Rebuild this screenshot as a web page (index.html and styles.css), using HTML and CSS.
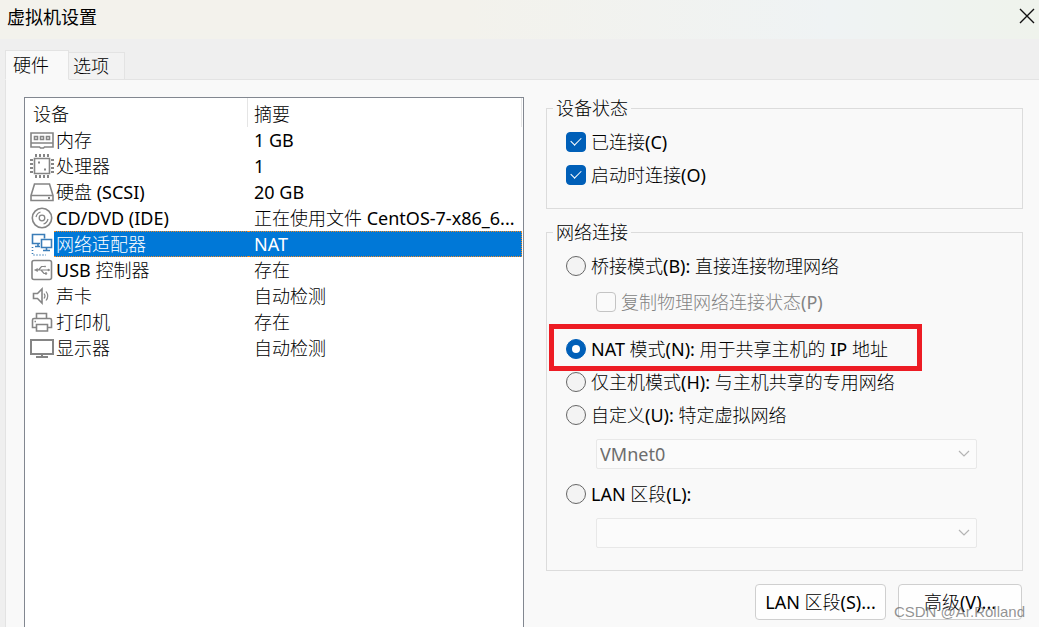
FILE: index.html
```html
<!DOCTYPE html>
<html lang="zh-CN">
<head>
  <meta charset="UTF-8">
  <meta name="viewport" content="width=device-width, initial-scale=1.0">
  <title>虚拟机设置</title>
  <link rel="stylesheet" href="styles.css">
</head>
<body>

  <header class="titlebar">
    <h1>虚拟机设置</h1>
    <button class="close" type="button" aria-label="关闭">
      <svg width="16" height="16" viewBox="0 0 16 16"><path d="M1 1l14 14M15 1L1 15" stroke="#111" stroke-width="1.4" fill="none"/></svg>
    </button>
  </header>

  <nav class="tabs">
    <button class="tab active" type="button">硬件</button>
    <button class="tab" type="button">选项</button>
  </nav>

  <main class="panel">

    <!-- Device list -->
    <div class="device-list">
      <table>
        <colgroup>
          <col class="col-icon">
          <col class="col-name">
          <col>
        </colgroup>
        <thead>
          <tr><th colspan="2">设备</th><th>摘要</th></tr>
        </thead>
        <tbody>
          <tr>
            <td class="icon"><svg viewBox="0 0 24 24"><path d="M1 5h22v10H1zM1 15v4h8.500l1 1h3l1-1H23v-4"/><path d="M4.500 8.500h3v3h-3zM10.500 8.500h3v3h-3zM16.500 8.500h3v3h-3z"/></svg></td>
            <td>内存</td><td>1 GB</td>
          </tr>
          <tr>
            <td class="icon"><svg viewBox="0 0 24 24"><path d="M4.500 4.500h15v15h-15z"/><path stroke-width="3" stroke-dasharray="2 2" d="M5 1.500h14M5 22.500h14M1.500 5v14M22.500 5v14"/><path stroke-width="2" d="M8 8.500h2M14 15.500h2"/></svg></td>
            <td>处理器</td><td>1</td>
          </tr>
          <tr>
            <td class="icon"><svg viewBox="0 0 24 24"><path d="M4.500 4h15L23 15.500v5H1v-5zM1 15.500h22"/><path stroke-width="2" d="M18 18h2"/></svg></td>
            <td>硬盘 (SCSI)</td><td>20 GB</td>
          </tr>
          <tr>
            <td class="icon"><svg viewBox="0 0 24 24"><circle cx="12" cy="12" r="9.700"/><circle cx="12" cy="12" r="2.800" stroke-width="1.300"/><path stroke-width="1.200" d="M6 11q1-4 4.500-5M18 13q-1 4-4.500 5"/></svg></td>
            <td>CD/DVD (IDE)</td><td>正在使用文件 CentOS-7-x86_6...</td>
          </tr>
          <tr class="selected">
            <td class="icon"><svg viewBox="0 0 24 24"><path stroke="#3b7db8" d="M10 11.500H2.500v-9h12v4M8 11.500v3M5 14.500h5"/><path stroke="#3b7db8" d="M11.500 7.500h10v8h-10zM16.500 15.500v3M13 18.500h7"/><path stroke="#3b7db8" stroke-dasharray="1 2" d="M2.500 15v8H16"/></svg></td>
            <td>网络适配器</td><td>NAT</td>
          </tr>
          <tr>
            <td class="icon"><svg viewBox="0 0 24 24"><rect x="2" y="2.500" width="19.500" height="19" rx="2"/><path stroke-width="1.200" d="M6 12h13M8.500 12l3-3.500h3M11 12l3 3.500h2"/><path d="M4.500 12L7.500 10.500v3zM18 11l2 1-2 1zM14.500 8h1v1h-1z" fill="#858585" stroke-width=".6"/><circle cx="16" cy="15.500" r=".5"/></svg></td>
            <td>USB 控制器</td><td>存在</td>
          </tr>
          <tr>
            <td class="icon"><svg viewBox="0 0 24 24"><path d="M3.500 9.500h4l4.500-4.500v14l-4.500-4.500h-4z"/><path stroke-width="1.200" d="M14 9.500q2 2.500 0 5M16 7.500q3.500 4.500 0 9"/></svg></td>
            <td>声卡</td><td>自动检测</td>
          </tr>
          <tr>
            <td class="icon"><svg viewBox="0 0 24 24"><path d="M6.500 8.500V3.500h10v5M6.500 17.500H2.500V10q0-1.500 1.500-1.500h16q1.500 0 1.500 1.500v7.500h-4"/><path d="M6.500 14.500h11v6.500h-11zM4.500 11.500h1.500"/></svg></td>
            <td>打印机</td><td>存在</td>
          </tr>
          <tr>
            <td class="icon"><svg viewBox="0 0 24 24"><path stroke-width="2" d="M1 4h22v14H1zM6 21h12M12 18v3"/></svg></td>
            <td>显示器</td><td>自动检测</td>
          </tr>
        </tbody>
      </table>
    </div>

    <!-- Settings of the selected device -->
    <form class="settings">
      <fieldset>
        <legend>设备状态</legend>
        <div class="group status">
          <label class="option"><input type="checkbox" checked>已连接(C)</label>
          <label class="option"><input type="checkbox" checked>启动时连接(O)</label>
        </div>
      </fieldset>

      <fieldset>
        <legend>网络连接</legend>
        <div class="group network">
          <label class="option"><input type="radio" name="net">桥接模式(B): 直接连接物理网络</label>
          <label class="option nested"><input type="checkbox" disabled>复制物理网络连接状态(P)</label>
          <label class="option marked"><input type="radio" name="net" checked>NAT 模式(N): 用于共享主机的 IP 地址</label>
          <label class="option"><input type="radio" name="net">仅主机模式(H): 与主机共享的专用网络</label>
          <label class="option"><input type="radio" name="net">自定义(U): 特定虚拟网络</label>
          <div class="dropdown">
            <select aria-label="特定虚拟网络" disabled><option>VMnet0</option></select>
            <svg width="12" height="8" viewBox="0 0 12 8"><path d="M1 1l5 5 5-5" stroke="#b4b4b4" stroke-width="1.200" fill="none"/></svg>
          </div>
          <label class="option"><input type="radio" name="net">LAN 区段(L):</label>
          <div class="dropdown">
            <select aria-label="LAN 区段" disabled><option></option></select>
            <svg width="12" height="8" viewBox="0 0 12 8"><path d="M1 1l5 5 5-5" stroke="#b4b4b4" stroke-width="1.200" fill="none"/></svg>
          </div>
        </div>
      </fieldset>

      <div class="actions">
        <button class="btn" type="button">LAN 区段(S)...</button>
        <button class="btn" type="button">高级(V)...</button>
      </div>
    </form>

  </main>

  <div class="watermark">CSDN @Ar.Rolland</div>

</body>
</html>
```
FILE: styles.css
```css
* {
  box-sizing: border-box;
}

body {
  margin: 0;
  min-height: 100vh;
  display: flex;
  flex-direction: column;
  position: relative;
  background-color: #efefef;
  color: #000;
  font-family: "Noto Sans", "Noto Sans CJK SC Light", "Noto Sans CJK SC", sans-serif;
  font-size: 18px;
  line-height: 22px;
}

button,
select {
  font: inherit;
  color: inherit;
}

/* Title bar */
.titlebar {
  height: 39px;
  padding: 0 4px 8px 7px;
  display: flex;
  align-items: center;
  justify-content: space-between;
  background: linear-gradient(90deg, #f3f2ec 0%, #f3f2ec 45%, #eff3f4 80%, #eff3ec 100%);
}

.titlebar h1 {
  margin: 0;
  font-family: "Noto Sans CJK SC", sans-serif;
  font-size: 18px;
  font-weight: normal;
}

.close {
  display: flex;
  padding: 0;
  border: none;
  background: none;
}

/* Tabs */
.tabs {
  display: flex;
  align-items: flex-end;
  height: 41px;
  padding-left: 5px;
}

.tab {
  height: 28px;
  padding: 0 15px 0 4px;
  border: 1px solid #e3e3e3;
  border-left: none;
  background-color: #f2f2f2;
}

.tab.active {
  position: relative;
  height: 30px;
  padding: 0 19px 0 7px;
  border-left: 1px solid #e3e3e3;
  border-bottom-color: #f9f9f9;
  background-color: #f9f9f9;
}

.panel {
  flex: 1;
  display: grid;
  grid-template-columns: 500fr 477fr;
  gap: 22px;
  margin: -1px 0 0 5px;
  padding: 17px 16px 0 18px;
  border-top: 1px solid #e3e3e3;
  border-left: 1px solid #e3e3e3;
  background-color: #f9f9f9;
}

/* Device list */
.device-list {
  border: 1px solid #828790;
  border-bottom: none;
  padding-right: 1px;
  background-color: #fff;
}

table {
  width: 100%;
  table-layout: fixed;
  border-collapse: separate;
  border-spacing: 0;
}

.col-icon {
  width: 29px;
}

.col-name {
  width: 194px;
}

th {
  height: 29px;
  padding: 2px 0 0 6px;
  border-right: 1px solid #e5e5e5;
  font-weight: normal;
  text-align: left;
}

th:first-child {
  padding-left: 8px;
}

td {
  height: 26px;
  padding: 0 0 0 6px;
  white-space: nowrap;
  overflow: hidden;
}

td:nth-child(2) {
  padding-left: 2px;
}

td.icon {
  padding-left: 5px;
}

.icon svg {
  display: block;
  width: 24px;
  height: 24px;
  fill: none;
  stroke: #858585;
  stroke-width: 1.6;
}

.selected td:not(.icon) {
  border: 1px dotted #f08a24;
  border-left: none;
  border-right: none;
  background-color: #0078d7;
  color: #fff;
}

.selected td:last-child {
  border-right: 1px dotted #f08a24;
}

/* Settings */
fieldset {
  min-width: 0;
  margin: 0 0 12px;
  padding: 0;
  border: 1px solid #dcdcdc;
}

legend {
  margin-left: 6px;
  padding: 0 3px;
}

.group {
  display: flex;
  flex-direction: column;
  align-items: flex-start;
}

.status {
  padding: 6px 19px 17px;
}

.network {
  padding: 6px 45px 22px 19px;
}

.option {
  display: flex;
  align-items: center;
  gap: 5px;
  height: 33px;
  white-space: nowrap;
}

.option.nested {
  margin: 3px 0 0 30px;
  color: #838383;
}

/* red frame round the chosen mode */
.option.marked {
  position: relative;
  margin-top: 14px;
}

.option.marked::after {
  content: "";
  position: absolute;
  inset: -8px -34px -6px -17px;
  border: 5px solid #ed1c24;
}

input {
  appearance: none;
  display: grid;
  place-items: center;
  flex: none;
  width: 20px;
  height: 20px;
  margin: 0;
  border: 1px solid #666;
  background-color: #f3f3f3;
}

input[type="checkbox"] {
  border-radius: 4px;
}

input[type="radio"] {
  border-radius: 50%;
}

input:checked {
  border-color: #005fb8;
  background-color: #005fb8;
}

input[type="checkbox"]:checked::before {
  content: "";
  width: 9px;
  height: 5px;
  margin-bottom: 3px;
  border-left: 1px solid #fff;
  border-bottom: 1px solid #fff;
  transform: rotate(-45deg);
}

input[type="radio"]:checked::before {
  content: "";
  width: 8px;
  height: 8px;
  border-radius: 50%;
  background-color: #fff;
}

input:disabled {
  border-color: #c4c4c4;
  background-color: #fafafa;
}

.dropdown {
  position: relative;
  align-self: stretch;
  margin: 8px 0 8px 30px;
}

.dropdown:last-child {
  margin-bottom: 0;
}

.dropdown select {
  appearance: none;
  display: block;
  width: 100%;
  height: 30px;
  padding: 0 3px;
  border: 1px solid #e8e8e8;
  border-radius: 2px;
  background-color: #fbfbfb;
  color: #6d6d6d;
  opacity: 1;
}

.dropdown svg {
  position: absolute;
  top: 11px;
  right: 7px;
}

.actions {
  display: flex;
  justify-content: flex-end;
  gap: 12px;
  padding: 1px 1px 7px 0;
}

.btn {
  height: 36px;
  padding: 0 8px;
  border: 1px solid #cfcfcf;
  border-radius: 4px;
  background-color: #fefefe;
}

.btn:first-child {
  min-width: 131px;
}

.btn:last-child {
  min-width: 124px;
}

.watermark {
  position: absolute;
  right: 14px;
  bottom: 5px;
  font-family: "Liberation Sans", sans-serif;
  font-size: 15px;
  line-height: 20px;
  color: rgba(110, 110, 110, 0.75);
}
```
